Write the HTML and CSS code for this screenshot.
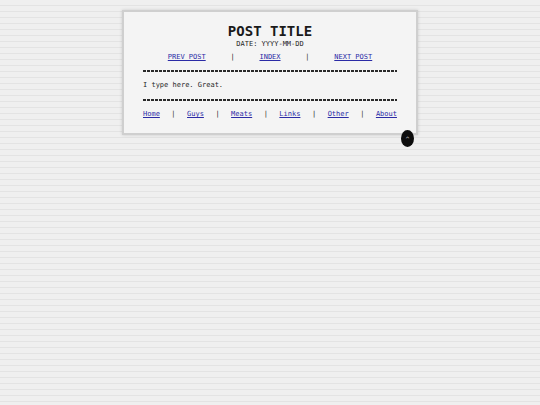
FILE: index.html
```html
<!DOCTYPE html>
<html>
<head>
<meta charset="utf-8">
<link rel="stylesheet" href="styles.css">
</head>
<body>
<main class="card">
  <h1 class="title">POST TITLE</h1>
  <div class="date">DATE: YYYY-MM-DD</div>
  <nav class="postnav">
    <a href="#">PREV POST</a><span>|</span><a href="#">INDEX</a><span>|</span><a href="#">NEXT POST</a>
  </nav>
  <div class="rule"></div>
  <p class="body">I type here. Great.</p>
  <div class="rule"></div>
  <nav class="sitenav">
    <a href="#">Home</a><span>|</span><a href="#">Guys</a><span>|</span><a href="#">Meats</a><span>|</span><a href="#">Links</a><span>|</span><a href="#">Other</a><span>|</span><a href="#">About</a>
  </nav>
  <a class="top" href="#">^</a>
</main>
</body>
</html>
```
FILE: styles.css
```css
html, body {
  margin: 0;
  padding: 0;
}
body {
  width: 540px;
  height: 405px;
  background-color: #efefef;
  background-image: repeating-linear-gradient(to bottom, transparent 0, transparent 5px, #e3e3e3 5px, #e3e3e3 6px);
  font-family: "DejaVu Sans Mono", monospace;
  color: #1f1f1f;
  overflow: hidden;
}
.card {
  position: relative;
  box-sizing: border-box;
  width: 296px;
  margin: 10px auto 0;
  padding: 11px 19px 14px;
  background: #f4f4f4;
  border: 2px solid #cfcfcf;
  box-shadow: 0 0 3px rgba(0,0,0,0.15);
  font-size: 7px;
  line-height: 9px;
}
.title {
  margin: 0;
  font-size: 14px;
  line-height: 16px;
  font-weight: bold;
  text-align: center;
  color: #1a1a1a;
}
.date {
  text-align: center;
  margin-top: 1px;
}
.postnav {
  display: flex;
  justify-content: space-evenly;
  margin-top: 4px;
}
.sitenav {
  display: flex;
  justify-content: space-between;
  margin-top: 9px;
}
a {
  color: #2b2ba6;
}
.rule {
  height: 2px;
  margin-top: 8px;
  background-image: repeating-linear-gradient(to right, #2a2a2a 0, #2a2a2a 3px, transparent 3px, transparent 4px);
}
.body {
  margin: 9px 0 9px;
}
.top {
  position: absolute;
  right: 2px;
  bottom: -14px;
  width: 13px;
  height: 17px;
  border-radius: 50%;
  background: #0d0d0d;
  color: #fff;
  text-decoration: none;
  text-align: center;
  font-size: 6px;
  line-height: 17px;
}
```
